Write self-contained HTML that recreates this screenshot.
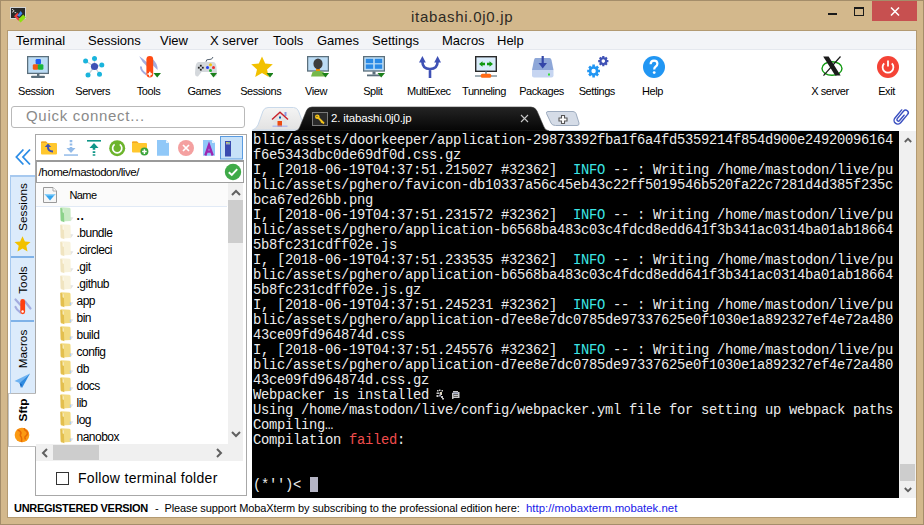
<!DOCTYPE html>
<html><head><meta charset="utf-8">
<style>
*{box-sizing:border-box}
html,body{margin:0;padding:0}
body{width:924px;height:525px;position:relative;overflow:hidden;background:#d3b88c;font-family:"Liberation Sans",sans-serif;color:#000}
.a{position:absolute}
#frame{position:absolute;left:0;top:0;width:924px;height:525px;border:1px solid #a48d6a}
#client{position:absolute;left:7px;top:30px;width:910px;height:488px;border:1px solid #b39a72;background:#fff}
#title{position:absolute;left:411px;top:8px;font-size:15px;letter-spacing:0.7px;color:#2e2a24;white-space:nowrap}
.menu{position:absolute;top:33px;font-size:13px;color:#000;white-space:nowrap}
.tlab{position:absolute;top:85px;font-size:11px;letter-spacing:-0.45px;white-space:nowrap;text-align:center;width:80px}
.ico{position:absolute;top:56px;width:22px;height:22px}
.term{position:absolute;left:252px;top:131px;width:647px;height:367px;background:#000}
.tl{position:absolute;left:253px;font-family:"Liberation Mono",monospace;font-size:13.8px;letter-spacing:-0.28px;color:#ececec;white-space:pre;line-height:15px}
.c{color:#3ce6e6}
.r{color:#f04c4c}
.row{position:absolute;left:76.5px;font-size:12px;letter-spacing:-0.5px;white-space:nowrap;color:#000}
.fold{position:absolute;left:59.5px;width:15px;height:16px}
.vt{position:absolute;overflow:visible}
.vt span{position:absolute;left:50%;top:50%;transform:translate(-50%,-50%) rotate(-90deg);font-size:11.8px;white-space:nowrap;line-height:12px}
</style></head><body>
<div id="frame"></div>
<!-- title icon -->
<svg class="a" style="left:10px;top:7px" width="17" height="17" viewBox="0 0 17 17">
<rect x="0.5" y="0.5" width="15" height="11" fill="#2a2a2a" stroke="#d4d4d4"/>
<path d="M2 2.2 L4.2 3.8 L2 5.4 M4.6 5.6 H6.2" stroke="#e0e0e0" fill="none" stroke-width="0.9"/>
<path d="M7.3 5.8 L9.2 7.6 L7 9.3 L9.9 12 L8.6 13.8 L4 9.3 Z" fill="#ee3c3c"/>
<path d="M10.7 4.1 L12.4 6.5 L9.6 9.8 L7.2 8.8 Z" fill="#3f86ee"/>
<path d="M9.2 11.6 L13.3 7.4 L15.8 10.5 L10.6 15.6 L8.8 13.8 Z" fill="#8ee010"/>
</svg>
<div id="title">itabashi.0j0.jp</div>
<!-- window buttons -->
<div class="a" style="left:828px;top:13px;width:9px;height:2px;background:#1a1a1a"></div>
<div class="a" style="left:854px;top:7px;width:10px;height:9px;border:1px solid #1a1a1a;border-top-width:2px"></div>
<div class="a" style="left:872px;top:1px;width:45px;height:20px;background:#c75050"></div>
<svg class="a" style="left:890px;top:7px" width="10" height="9" viewBox="0 0 10 9"><path d="M1 0.5 L9 8.5 M9 0.5 L1 8.5" stroke="#fff" stroke-width="1.5"/></svg>

<div id="client">
</div>
<!-- menu bar -->
<div class="a" style="left:8px;top:31px;width:908px;height:18px;background:#f3f4f7"></div>
<div class="a" style="left:8px;top:49px;width:908px;height:1px;background:#e5e8ee"></div>
<div class="menu" style="left:16px">Terminal</div>
<div class="menu" style="left:88px">Sessions</div>
<div class="menu" style="left:160px">View</div>
<div class="menu" style="left:210px">X server</div>
<div class="menu" style="left:273px">Tools</div>
<div class="menu" style="left:317px">Games</div>
<div class="menu" style="left:372px">Settings</div>
<div class="menu" style="left:442px">Macros</div>
<div class="menu" style="left:497px">Help</div>

<!-- toolbar icons -->
<svg class="ico" style="left:27px" viewBox="0 0 22 22">
 <rect x="0.6" y="0.6" width="20.8" height="16.8" fill="#bcdcf5" stroke="#5b6f7c" stroke-width="1.3"/>
 <rect x="10" y="17.5" width="2.4" height="2.5" fill="#5b6f7c"/>
 <rect x="4" y="19.8" width="14" height="2.2" rx="1" fill="#5b6f7c"/>
 <rect x="8.6" y="3" width="5.4" height="5.4" rx="1.3" fill="#1f5ff0"/>
 <rect x="5.8" y="8.2" width="5.6" height="5.6" rx="1.3" fill="#f25c12"/>
 <rect x="10.8" y="8.2" width="5.6" height="5.6" rx="1.3" fill="#19b53a"/>
</svg>
<svg class="ico" style="left:83px" viewBox="0 0 22 22">
 <path d="M11.5 10.5 L2.5 5 M11.5 10.5 L11.5 2.5 M11.5 10.5 L18.5 9 M11.5 10.5 L5 19 M11.5 10.5 L16.5 18" stroke="#c9d3da" stroke-width="1.3"/>
 <circle cx="11.5" cy="10.5" r="3.6" fill="#3f51b5"/>
 <circle cx="2.6" cy="5" r="2.5" fill="#1ab4dc"/><circle cx="11.5" cy="2.5" r="2.5" fill="#1ab4dc"/>
 <circle cx="18.8" cy="9" r="2.5" fill="#1ab4dc"/><circle cx="5" cy="19" r="2.5" fill="#1ab4dc"/>
 <circle cx="16.5" cy="18.2" r="2.5" fill="#1ab4dc"/>
</svg>
<svg class="ico" style="left:139px" viewBox="0 0 22 22">
 <path d="M0.2 0.2 Q2 1 8 6.5 L8 10.5 Q3 6 0.2 0.2 Z" fill="#a3acdf"/>
 <path d="M13.5 3 Q19 7.5 18.6 14 Q16 11.5 13.5 9 Z" fill="#a3acdf"/>
 <path d="M2.2 10.5 Q1 14 7.5 18.5" stroke="#a3acdf" stroke-width="2" fill="none"/>
 <rect x="7.4" y="0" width="6.8" height="21.5" rx="3.4" fill="#ff4a12"/>
 <path d="M10.8 15.8 V20.4 M8.5 18.1 H13.1" stroke="#fff" stroke-width="1.5"/>
 <path d="M14.5 17 H22 L18.2 21.5 Z" fill="#1a7f1a"/>
</svg>
<svg class="ico" style="left:195px" viewBox="0 0 22 22">
 <path d="M11 5.8 Q11 3 14 3.5 Q17 4 18 1" stroke="#556270" stroke-width="1" fill="none"/>
 <path d="M4 6 H18 Q21 6 21.5 11 L22 17 Q22 21 19 20.5 L15.5 16 H6.5 L3 20.5 Q0 21 0 17 L0.5 11 Q1 6 4 6 Z" fill="#d4d8dc"/>
 <g fill="#222"><rect x="4.9" y="8.8" width="1.8" height="1.8"/><rect x="4.9" y="12.8" width="1.8" height="1.8"/><rect x="2.9" y="10.8" width="1.8" height="1.8"/><rect x="6.9" y="10.8" width="1.8" height="1.8"/></g>
 <circle cx="15.5" cy="8.8" r="1.5" fill="#f2c40c"/><circle cx="12.5" cy="11.6" r="1.5" fill="#2040f0"/>
 <circle cx="18.5" cy="11.6" r="1.5" fill="#f03030"/><circle cx="15.5" cy="14.4" r="1.5" fill="#20b030"/>
 <path d="M15 17 H22 L18.5 21.5 Z" fill="#1a7f1a"/>
</svg>
<svg class="ico" style="left:251px" viewBox="0 0 22 22">
 <path d="M11 0.5 L14.2 7.6 L21.8 8.3 L16 13.4 L17.8 21 L11 17 L4.2 21 L6 13.4 L0.2 8.3 L7.8 7.6 Z" fill="#f2c100"/>
 <path d="M15.5 17 H22.5 L19 21.5 Z" fill="#1a7f1a"/>
</svg>
<svg class="ico" style="left:307px" viewBox="0 0 22 22">
 <rect x="0.6" y="0.6" width="20.8" height="14.4" fill="#bcdcf5" stroke="#5b6f7c" stroke-width="1.3"/>
 <path d="M4 20.5 L5.5 16 Q11 13 16.5 16 L18 20.5 Z" fill="#76b84a"/>
 <rect x="9" y="12.5" width="4" height="2.5" fill="#f39000"/>
 <ellipse cx="11" cy="7.8" rx="4.6" ry="5.4" fill="#3d3d3d"/>
 <path d="M15 17 H22 L18.5 21.5 Z" fill="#1a7f1a"/>
</svg>
<svg class="ico" style="left:363px" viewBox="0 0 22 22">
 <rect x="0.6" y="0.6" width="20.8" height="14.4" fill="#bcdcf5" stroke="#5b6f7c" stroke-width="1.3"/>
 <rect x="2.8" y="2.8" width="7.4" height="4.4" fill="#2a8ae6"/><rect x="11.8" y="2.8" width="7.4" height="4.4" fill="#2a8ae6"/>
 <rect x="2.8" y="8.4" width="7.4" height="4.4" fill="#2a8ae6"/><rect x="11.8" y="8.4" width="7.4" height="4.4" fill="#2a8ae6"/>
 <rect x="9.5" y="15.5" width="3" height="3" fill="#5b6f7c"/>
 <rect x="4" y="18.5" width="13" height="1.8" fill="#5b6f7c"/>
 <path d="M14.5 17 H22 L18.2 21.5 Z" fill="#1a7f1a"/>
</svg>
<svg class="ico" style="left:419px" viewBox="0 0 22 22">
 <path d="M11 22 V13 M3.4 5.5 Q3.4 13 11 13 Q18.6 13 18.6 5.5" stroke="#3f51b5" stroke-width="2.6" fill="none"/>
 <path d="M0 6.5 L3.4 0 L6.8 6.5 Z M15.2 6.5 L18.6 0 L22 6.5 Z" fill="#3f51b5"/>
</svg>
<svg class="ico" style="left:475px" viewBox="0 0 22 22">
 <rect x="0.7" y="0.7" width="20.6" height="14.6" fill="#d9ecfb" stroke="#2a2a2a" stroke-width="1.4"/>
 <path d="M4 8 L7.5 5.2 V6.8 H10 V9.2 H7.5 V10.8 Z M18 8 L14.5 5.2 V6.8 H12 V9.2 H14.5 V10.8 Z" fill="#119911"/>
 <rect x="10.2" y="15.5" width="1.6" height="3" fill="#6a8a9a"/>
 <rect x="0" y="19.3" width="22" height="1.4" fill="#7a8e98"/>
 <rect x="5.8" y="17.8" width="10.4" height="4" rx="1.5" fill="#ff6a14"/>
</svg>
<svg class="ico" style="left:532px" viewBox="0 0 22 22">
 <path d="M3.5 2 H17.5 Q19 2 19.5 4 L21.5 14 H0 L2 4 Q2.5 2 3.5 2 Z" fill="#8ea7d8"/>
 <path d="M0 14 H21.5 V19.5 Q21.5 21.5 19.5 21.5 H2 Q0 21.5 0 19.5 Z" fill="#c6d5f1"/>
 <rect x="16" y="17.5" width="2" height="2" fill="#33dd33"/>
 <path d="M10.7 0 V8" stroke="#3346a8" stroke-width="2.2"/>
 <path d="M6.5 7 H15 L10.7 12.5 Z" fill="#3346a8"/>
</svg>
<svg class="ico" style="left:587px" viewBox="0 0 22 22">
 <g fill="#2196f3"><circle cx="6.6" cy="15" r="4.8"/>
 <g stroke="#2196f3" stroke-width="2.6"><path d="M6.6 8.6 V21.4 M0.2 15 H13 M2.1 10.5 L11.1 19.5 M11.1 10.5 L2.1 19.5"/></g></g>
 <circle cx="6.6" cy="15" r="2.2" fill="#fff"/>
 <g fill="#3f51b5"><circle cx="16.3" cy="5.1" r="3.9"/>
 <g stroke="#3f51b5" stroke-width="2.2"><path d="M16.3 0 V10.2 M11.2 5.1 H21.4 M12.7 1.5 L19.9 8.7 M19.9 1.5 L12.7 8.7"/></g></g>
 <circle cx="16.3" cy="5.1" r="1.8" fill="#fff"/>
</svg>
<svg class="ico" style="left:643px" viewBox="0 0 22 22">
 <circle cx="11" cy="11" r="11" fill="#2196f3"/>
 <path d="M7.6 8.2 Q7.6 4.6 11 4.6 Q14.4 4.6 14.4 7.8 Q14.4 9.6 12.5 10.8 Q11.2 11.6 11.2 13.6" stroke="#fff" stroke-width="2.2" fill="none"/>
 <circle cx="11.2" cy="16.6" r="1.4" fill="#fff"/>
</svg>
<svg class="ico" style="left:821px" viewBox="0 0 22 22">
 <ellipse cx="11" cy="12.5" rx="10" ry="6.8" fill="none" stroke="#119911" stroke-width="1.4"/>
 <path d="M2.2 0.5 H7.6 L19.6 19.6 H14.2 Z" fill="#1a1a1a"/>
 <path d="M19.5 0.5 L2.5 19.6" stroke="#1a1a1a" stroke-width="1.2"/>
</svg>
<svg class="ico" style="left:877px" viewBox="0 0 22 22">
 <circle cx="11" cy="11" r="11" fill="#f44336"/>
 <path d="M7.2 7.4 A5.4 5.4 0 1 0 14.8 7.4" stroke="#fff" stroke-width="1.8" fill="none"/>
 <path d="M11 4.4 V10.6" stroke="#fff" stroke-width="1.8"/>
</svg>

<!-- toolbar labels -->
<div class="tlab" style="left:-4px">Session</div>
<div class="tlab" style="left:52.7px">Servers</div>
<div class="tlab" style="left:108.5px">Tools</div>
<div class="tlab" style="left:164px">Games</div>
<div class="tlab" style="left:220.7px">Sessions</div>
<div class="tlab" style="left:276px">View</div>
<div class="tlab" style="left:332.8px">Split</div>
<div class="tlab" style="left:388.8px">MultiExec</div>
<div class="tlab" style="left:444px">Tunneling</div>
<div class="tlab" style="left:501.5px">Packages</div>
<div class="tlab" style="left:556.8px">Settings</div>
<div class="tlab" style="left:612.5px">Help</div>
<div class="tlab" style="left:790px">X server</div>
<div class="tlab" style="left:846.5px">Exit</div>

<!-- quick connect -->
<div class="a" style="left:11px;top:106px;width:234px;height:22px;border:1px solid #b9b9b9;border-radius:3px;background:#fff"></div>
<div class="a" style="left:26px;top:107px;font-size:15px;letter-spacing:0.7px;color:#8a8a8a;white-space:nowrap">Quick connect...</div>

<!-- tabs -->
<div class="a" style="left:252px;top:130px;width:626px;height:1px;background:#d3e0ee"></div>
<svg class="a" style="left:248px;top:102px" width="352" height="30" viewBox="248 102 352 30">
 <defs><linearGradient id="hg" x1="0" y1="0" x2="0" y2="1"><stop offset="0" stop-color="#f4f4f4"/><stop offset="1" stop-color="#e2e2e2"/></linearGradient></defs>
 <path d="M252.5 130 Q256 129 258 125 L263 111 Q264.5 107.5 268 107.5 L293.5 107.5 Q297 107.5 298.5 111 L304 126 Q305 129.5 308 130 Z" fill="url(#hg)" stroke="#c9d9ea" stroke-width="1"/>
 <linearGradient id="bg" x1="0" y1="0" x2="0" y2="1"><stop offset="0" stop-color="#242424"/><stop offset="1" stop-color="#050505"/></linearGradient><path d="M295.5 131 Q298.5 130.5 299.8 127 L306.5 110.5 Q308 107 312 107 L531 107 Q535 107 537 111 L543.5 126 Q545 130.5 549 131 Z" fill="url(#bg)" stroke="#3a3a3a" stroke-width="0.6"/>
 <path d="M555.5 125.5 Q552 125.5 551 123 L546.5 113.5 Q546 111.5 548 111.5 L573 111.5 Q575 111.5 576 113.5 L579 123 Q579.5 125.5 577 125.5 Z" fill="#d5dce7" stroke="#9eacbf" stroke-width="1"/>
 <path d="M561.5 115.5 H564.5 V118 H567 V121 H564.5 V123.5 H561.5 V121 H559 V118 H561.5 Z" fill="#fff" stroke="#555" stroke-width="1.1"/>
 <!-- house -->
 <rect x="284.5" y="112" width="2" height="4" fill="#8d9ae0"/>
 <path d="M273.5 119 L280 113.5 L286.5 119 V126 H273.5 Z" fill="#e4e4e4"/>
 <path d="M272 119.5 L280 112.2 L288 119.5" stroke="#c8202a" stroke-width="1.4" fill="none"/>
 <rect x="279" y="116.5" width="2" height="2" fill="#0a5aa8"/>
 <rect x="277.5" y="121" width="4.5" height="6" fill="#ee4a10"/>
 <rect x="272.5" y="125.5" width="15" height="1.5" fill="#a8b4f0" opacity="0.8"/>
 <!-- key icon -->
 <rect x="312.5" y="112.5" width="15" height="13" fill="#2a2a2a" stroke="#7a7a7a" stroke-width="1"/>
 <circle cx="317.3" cy="116.8" r="2.3" fill="#f2c21a"/><circle cx="317" cy="116.4" r="0.6" fill="#5a4a10"/>
 <path d="M318 117.5 L324 123.5 M322 121.5 L321 122.5" stroke="#f2c21a" stroke-width="1.8"/>
 <!-- close x -->
 <path d="M521 115 L528 122 M528 115 L521 122" stroke="#c8c8c8" stroke-width="1.1"/>
</svg>
<div class="a" style="left:331px;top:112px;font-size:11.5px;letter-spacing:-0.15px;color:#fff;white-space:nowrap">2. itabashi.0j0.jp</div>
<svg class="a" style="left:888px;top:104px" width="26" height="26" viewBox="0 0 26 26">
 <g transform="translate(13,12.5) rotate(40) translate(-4.5,-9.5)">
 <path d="M0.8 4 V14.5 A3.7 3.7 0 0 0 8.2 14.5 V3.6 A2.6 2.6 0 0 0 3 3.6 V13.5 A1.5 1.5 0 0 0 6 13.5 V6.5" stroke="#3a4fc0" stroke-width="1.45" fill="none" stroke-linecap="round"/>
 </g>
</svg>

<!-- terminal -->
<div class="term"></div>
<div class="a" style="left:899px;top:131px;width:17px;height:367px;background:#f0f0f0"></div>
<div class="a" style="left:900px;top:464px;width:15px;height:17px;background:#cdcdcd"></div>
<svg class="a" style="left:904px;top:137px" width="8" height="6" viewBox="0 0 8 6"><path d="M0.8 5 L4 1.8 L7.2 5" stroke="#606060" stroke-width="1.8" fill="none"/></svg>
<svg class="a" style="left:904px;top:487px" width="8" height="6" viewBox="0 0 8 6"><path d="M0.8 1 L4 4.2 L7.2 1" stroke="#606060" stroke-width="1.8" fill="none"/></svg>
<div class="tl" style="top:133px">blic/assets/doorkeeper/application-29873392fba1f6a4fd5359214f854d900e24920096164</div>
<div class="tl" style="top:148px">f6e5343dbc0de69df0d.css.gz</div>
<div class="tl" style="top:163px">I, [2018-06-19T04:37:51.215027 #32362]  <span class="c">INFO</span> -- : Writing /home/mastodon/live/pu</div>
<div class="tl" style="top:178px">blic/assets/pghero/favicon-db10337a56c45eb43c22ff5019546b520fa22c7281d4d385f235c</div>
<div class="tl" style="top:193px">bca67ed26bb.png</div>
<div class="tl" style="top:208px">I, [2018-06-19T04:37:51.231572 #32362]  <span class="c">INFO</span> -- : Writing /home/mastodon/live/pu</div>
<div class="tl" style="top:223px">blic/assets/pghero/application-b6568ba483c03c4fdcd8edd641f3b341ac0314ba01ab18664</div>
<div class="tl" style="top:238px">5b8fc231cdff02e.js</div>
<div class="tl" style="top:253px">I, [2018-06-19T04:37:51.233535 #32362]  <span class="c">INFO</span> -- : Writing /home/mastodon/live/pu</div>
<div class="tl" style="top:268px">blic/assets/pghero/application-b6568ba483c03c4fdcd8edd641f3b341ac0314ba01ab18664</div>
<div class="tl" style="top:283px">5b8fc231cdff02e.js.gz</div>
<div class="tl" style="top:298px">I, [2018-06-19T04:37:51.245231 #32362]  <span class="c">INFO</span> -- : Writing /home/mastodon/live/pu</div>
<div class="tl" style="top:313px">blic/assets/pghero/application-d7ee8e7dc0785de97337625e0f1030e1a892327ef4e72a480</div>
<div class="tl" style="top:328px">43ce09fd964874d.css</div>
<div class="tl" style="top:343px">I, [2018-06-19T04:37:51.245576 #32362]  <span class="c">INFO</span> -- : Writing /home/mastodon/live/pu</div>
<div class="tl" style="top:358px">blic/assets/pghero/application-d7ee8e7dc0785de97337625e0f1030e1a892327ef4e72a480</div>
<div class="tl" style="top:373px">43ce09fd964874d.css.gz</div>
<div class="tl" style="top:388px">Webpacker is installed</div>
<div class="tl" style="top:403px">Using /home/mastodon/live/config/webpacker.yml file for setting up webpack paths</div>
<div class="tl" style="top:418px">Compiling…</div>
<div class="tl" style="top:433px">Compilation <span class="r">failed</span>:</div>
<div class="tl" style="top:448px"></div>
<div class="tl" style="top:463px"></div>
<div class="tl" style="top:478px">(*'')&lt; </div>
<div class="a" style="left:310px;top:477px;width:8px;height:15px;background:#b4b4c4"></div>
<svg class="a" style="left:436px;top:389px" width="28" height="11" viewBox="0 0 28 11">
 <g fill="#c8c8c8">
 <rect x="1" y="1" width="1.5" height="1.5"/><rect x="3" y="0.5" width="1.5" height="1.5"/><rect x="5.5" y="1" width="1.5" height="1.5"/>
 <rect x="0.5" y="3.5" width="3" height="1.5"/><rect x="4" y="3" width="2" height="3" fill="#e0d8c0"/>
 <rect x="0.5" y="6" width="2" height="2"/><rect x="3" y="5.5" width="2" height="2" fill="#a0a0b8"/>
 <rect x="5" y="7" width="2" height="2"/><rect x="6" y="9" width="2" height="1.5"/>
 <rect x="17" y="2" width="5" height="1.5"/><rect x="16.5" y="3.5" width="6" height="1.5" fill="#a8b0c8"/>
 <rect x="17.5" y="5.5" width="5" height="1.5"/><rect x="16" y="7.5" width="7" height="1.5"/>
 <rect x="16" y="4" width="1.5" height="6"/><rect x="22" y="3" width="1.5" height="6"/>
 </g>
</svg>

<!-- sftp panel -->
<div class="a" style="left:35px;top:134px;width:212px;height:362px;border:1px solid #a8a8a8;background:#fff"></div>
<div class="a" style="left:8px;top:393px;width:28px;height:54px;background:#fff;border:1px solid #c4c4c4;border-right:none"></div>
<div class="a" style="left:35px;top:394px;width:1px;height:52px;background:#fff"></div>
<!-- left sidebar -->
<svg class="a" style="left:14px;top:148px" width="18" height="18" viewBox="0 0 18 18">
 <path d="M9.4 1.5 L2.4 9 L9.4 16.5 M16 1.5 L9 9 L16 16.5" stroke="#2b8ce6" stroke-width="1.8" fill="none"/>
</svg>
<div class="a" style="left:10px;top:175px;width:25px;height:219px;background:#dcebfb;border-left:1px solid #a7c9ef;border-top:2px solid #a7c9ef;border-bottom:1px solid #b8b8b8"></div>
<div class="a" style="left:11px;top:256px;width:23px;height:2px;background:#7fb2e8"></div>
<div class="a" style="left:11px;top:320px;width:23px;height:2px;background:#7fb2e8"></div>
<div class="vt" style="left:13px;top:184px;width:19px;height:46px"><span>Sessions</span></div>
<div class="vt" style="left:13px;top:265px;width:19px;height:29px"><span>Tools</span></div>
<div class="vt" style="left:13px;top:330px;width:19px;height:38px"><span>Macros</span></div>
<div class="vt" style="left:13px;top:399px;width:19px;height:22px"><span style="font-weight:bold">Sftp</span></div>
<svg class="a" style="left:14px;top:236px" width="17" height="16" viewBox="0 0 17 16">
 <path d="M8.5 0.3 L10.9 5.4 L16.5 6 L12.3 9.8 L13.5 15.5 L8.5 12.6 L3.5 15.5 L4.7 9.8 L0.5 6 L6.1 5.4 Z" fill="#f2c100"/>
</svg>
<svg class="a" style="left:10px;top:294px" width="24" height="24" viewBox="0 0 24 24">
 <path d="M5.5 5.5 L10.5 11 M15 7.5 L20.5 14.5 M5.5 13 Q6.5 16 10.5 18.5" stroke="#a3acdf" stroke-width="2.2" stroke-linecap="round" fill="none"/>
 <rect x="10.3" y="5" width="4.8" height="15.2" rx="2.4" fill="#ff4010"/>
 <circle cx="12.6" cy="17.5" r="1.2" fill="#fff"/>
</svg>
<svg class="a" style="left:14px;top:373px" width="17" height="16" viewBox="0 0 17 16">
 <path d="M16 0.5 L0.5 8 L5.5 10 Z" fill="#6fb3f2"/>
 <path d="M16 0.5 L5.5 10 L8 15 Z" fill="#2f8be0"/>
 <path d="M5.5 10 L7 15 L8 11.5 Z" fill="#1565c0"/>
</svg>
<svg class="a" style="left:14px;top:427px" width="16" height="16" viewBox="0 0 16 16">
 <circle cx="8" cy="8" r="7.3" fill="#fb9a14"/>
 <path d="M3.5 3 Q6.5 3.5 7 6 Q5.5 8.5 7.2 10 Q8.2 12 7.5 15 M10 1.2 Q10.5 3.5 12.8 4.2 Q14.5 6.5 12.2 8.8 Q10 9.5 11.5 12.5" stroke="#e86a06" stroke-width="1.5" fill="none"/>
</svg>

<!-- sftp panel content -->
<svg width="0" height="0" style="position:absolute">
 <defs>
  <g id="fy"><path d="M13.5 10.5 L10.5 14.5 L10 10 Z" fill="#e4e4e4"/>
   <path d="M1 0.2 L9.5 0.8 Q10.5 1 10.5 2 L10.8 14 L1 14.6 Z" fill="#f2da80"/>
   <path d="M0.2 0.6 L3.8 2.4 L4.3 15.2 L0.6 13.6 Z" fill="#e3bf4e"/>
   <path d="M2.6 1.6 L3.8 2.4 L3.8 6 L2.6 5.2 Z" fill="#fbf3d0"/><rect x="9.8" y="10.6" width="1.2" height="2.6" fill="#a9cdf2"/></g>
<g id="fp"><path d="M13.5 10.5 L10.5 14.5 L10 10 Z" fill="#e4e4e4"/>
   <path d="M1 0.2 L9.5 0.8 Q10.5 1 10.5 2 L10.8 14 L1 14.6 Z" fill="#f8f2dc"/>
   <path d="M0.2 0.6 L3.8 2.4 L4.3 15.2 L0.6 13.6 Z" fill="#f0e4c0"/>
   <path d="M2.6 1.6 L3.8 2.4 L3.8 6 L2.6 5.2 Z" fill="#fffaf0"/></g>
<g id="fg"><path d="M13.5 10.5 L10.5 14.5 L10 10 Z" fill="#e4e4e4"/>
   <path d="M1 0.2 L9.5 0.8 Q10.5 1 10.5 2 L10.8 14 L1 14.6 Z" fill="#c8eac4"/>
   <path d="M0.2 0.6 L3.8 2.4 L4.3 15.2 L0.6 13.6 Z" fill="#8cd28a"/>
   <path d="M2.6 1.6 L3.8 2.4 L3.8 6 L2.6 5.2 Z" fill="#e6f6e4"/></g>
 </defs>
</svg>
<!-- sftp toolbar -->
<svg class="a" style="left:36px;top:135px" width="210" height="25" viewBox="36 135 210 25">
 <path d="M41 142.5 Q41 141.5 42 141.5 H46 L47.5 143 H56 Q57 143 57 144 V153.5 Q57 154.5 56 154.5 H42 Q41 154.5 41 153.5 Z" fill="#ffc72e"/>
 <path d="M41 142.5 Q41 141.5 42 141.5 H46 L47.5 143 H41 Z" fill="#f3a724"/>
 <path d="M48 146 Q47.5 151.5 53 151.5" stroke="#3f51b5" stroke-width="2" fill="none"/>
 <path d="M44.8 147 L48 143.5 L51.2 147 Z" fill="#3f51b5"/>
 <path d="M71 140 V142.2 M71 143.6 V145.6 M71 147 V148.5" stroke="#93bbe9" stroke-width="2.6"/>
 <path d="M66.5 148 H75.5 L71 153 Z" fill="#93bbe9"/>
 <rect x="64" y="154.3" width="14" height="1.5" fill="#93bbe9"/>
 <rect x="87" y="140" width="14" height="1.6" fill="#0f9688"/>
 <path d="M89.5 148 H98.5 L94 143 Z" fill="#0f9688"/>
 <path d="M94 147.5 V149.8 M94 151.2 V153 M94 154.2 V155.8" stroke="#0f9688" stroke-width="2.6"/>
 <circle cx="117.2" cy="148.2" r="8" fill="#6cb42c"/>
 <path d="M114.6 144.4 A4.6 4.6 0 1 0 119.8 144.4" stroke="#fff" stroke-width="1.7" fill="none"/>
 <path d="M132 142.5 Q132 141.5 133 141.5 H137 L138.5 143 H146 Q147 143 147 144 V151.5 Q147 152.5 146 152.5 H133 Q132 152.5 132 151.5 Z" fill="#ffc72e"/>
 <path d="M132 142.5 Q132 141.5 133 141.5 H137 L138.5 143 H132 Z" fill="#f3a724"/>
 <circle cx="144.4" cy="151.6" r="4" fill="#3aa43a"/>
 <path d="M144.4 149.3 V153.9 M142.1 151.6 H146.7" stroke="#fff" stroke-width="1.5"/>
 <path d="M157 140 H166 L169 143 V155.8 H157 Z" fill="#90c8f8"/>
 <path d="M166 140 V143 H169 Z" fill="#e6f3fd"/>
 <circle cx="186" cy="148" r="8" fill="#f4a0a0"/>
 <path d="M183 145 L189 151 M189 145 L183 151" stroke="#fff" stroke-width="1.7"/>
 <path d="M203 140 H212 L215 143 V155.8 H203 Z" fill="#90c8f8"/>
 <path d="M212 140 V143 H215 Z" fill="#e6f3fd"/>
 <path d="M205.3 155.5 L209 144.8 L212.7 155.5 M206.6 151.6 H211.4" stroke="#9c27b0" stroke-width="2.3" fill="none"/>
 <rect x="220.5" y="136.5" width="22" height="22.5" fill="#c7e1f8" stroke="#5a9be0" stroke-width="1"/>
 <rect x="225" y="141" width="6" height="15.5" fill="#3a4bb0"/>
 <rect x="226" y="142" width="4" height="2.5" fill="#9fa8c8"/>
 <rect x="226.2" y="142" width="1.2" height="1.2" fill="#f0d020"/><rect x="228.6" y="142" width="1.2" height="1.2" fill="#60d060"/>
</svg>
<!-- path box -->
<div class="a" style="left:36px;top:160px;width:208px;height:23px;border:1px solid #a0a0a0;border-top:2px solid #9a9a9a"></div>
<div class="a" style="left:38.5px;top:166px;font-size:11.5px;letter-spacing:-0.44px;white-space:nowrap">/home/mastodon/live/</div>
<svg class="a" style="left:224px;top:163px" width="18" height="18" viewBox="0 0 18 18">
 <circle cx="9" cy="9" r="8.2" fill="#3faa48"/>
 <path d="M4.8 9.2 L7.8 12 L13.2 6.2" stroke="#fff" stroke-width="1.9" fill="none"/>
</svg>
<!-- header -->
<div class="a" style="left:36px;top:183px;width:192px;height:23px;background:#fbfbfb"></div>
<div class="a" style="left:36px;top:206px;width:191px;height:1px;background:#e1eaf6"></div>
<svg class="a" style="left:43px;top:187px" width="15" height="16" viewBox="0 0 15 16">
 <path d="M0.5 0.5 H10 L13.5 4 V15.5 H0.5 Z" fill="#f6f6f6" stroke="#9a9a9a" stroke-width="1"/>
 <path d="M10 0.5 V4 H13.5" fill="#fff" stroke="#9a9a9a" stroke-width="0.8"/>
 <path d="M1.5 7 H12.5 L7 13.5 Z" fill="#35a6f0"/>
 <path d="M1.5 7 H12.5 L11 8.5 H3 Z" fill="#8fd2fa"/>
</svg>
<div class="a" style="left:69.5px;top:189px;font-size:11px;letter-spacing:-0.6px;white-space:nowrap">Name</div>
<!-- rows -->
<svg class="fold" style="top:207px"><use href="#fg"/></svg><div class="row" style="top:209px;font-weight:bold;letter-spacing:0.6px">..</div>
<svg class="fold" style="top:224px"><use href="#fp"/></svg><div class="row" style="top:226px">.bundle</div>
<svg class="fold" style="top:241px"><use href="#fp"/></svg><div class="row" style="top:243px">.circleci</div>
<svg class="fold" style="top:258px"><use href="#fp"/></svg><div class="row" style="top:260px">.git</div>
<svg class="fold" style="top:275px"><use href="#fp"/></svg><div class="row" style="top:277px">.github</div>
<svg class="fold" style="top:292px"><use href="#fy"/></svg><div class="row" style="top:294px">app</div>
<svg class="fold" style="top:309px"><use href="#fy"/></svg><div class="row" style="top:311px">bin</div>
<svg class="fold" style="top:326px"><use href="#fy"/></svg><div class="row" style="top:328px">build</div>
<svg class="fold" style="top:343px"><use href="#fy"/></svg><div class="row" style="top:345px">config</div>
<svg class="fold" style="top:360px"><use href="#fy"/></svg><div class="row" style="top:362px">db</div>
<svg class="fold" style="top:377px"><use href="#fy"/></svg><div class="row" style="top:379px">docs</div>
<svg class="fold" style="top:394px"><use href="#fy"/></svg><div class="row" style="top:396px">lib</div>
<svg class="fold" style="top:411px"><use href="#fy"/></svg><div class="row" style="top:413px">log</div>
<svg class="fold" style="top:428px"><use href="#fy"/></svg><div class="row" style="top:430px">nanobox</div>
<!-- v scrollbar -->
<div class="a" style="left:228px;top:183px;width:15px;height:278px;background:#f0f0f0"></div>
<div class="a" style="left:228px;top:200px;width:15px;height:43px;background:#cdcdcd"></div>
<svg class="a" style="left:231px;top:189px" width="10" height="7" viewBox="0 0 10 7"><path d="M1 6 L5 2 L9 6" stroke="#606060" stroke-width="2" fill="none"/></svg>
<svg class="a" style="left:231px;top:431px" width="10" height="7" viewBox="0 0 10 7"><path d="M1 1 L5 5 L9 1" stroke="#606060" stroke-width="2" fill="none"/></svg>
<!-- h scrollbar -->
<div class="a" style="left:36px;top:444px;width:192px;height:17px;background:#f0f0f0"></div>
<div class="a" style="left:53px;top:445px;width:46px;height:15px;background:#cdcdcd"></div>
<svg class="a" style="left:41px;top:448px" width="7" height="10" viewBox="0 0 7 10"><path d="M6 1 L2 5 L6 9" stroke="#606060" stroke-width="2" fill="none"/></svg>
<svg class="a" style="left:216px;top:448px" width="7" height="10" viewBox="0 0 7 10"><path d="M1 1 L5 5 L1 9" stroke="#606060" stroke-width="2" fill="none"/></svg>
<!-- follow -->
<div class="a" style="left:56px;top:472px;width:13px;height:13px;border:1px solid #333;background:#fff"></div>
<div class="a" style="left:78px;top:470px;font-size:14px;letter-spacing:0.3px;white-space:nowrap">Follow terminal folder</div>

<!-- status bar -->
<div class="a" style="left:14px;top:502px;font-size:11px;font-weight:bold;letter-spacing:-0.3px;white-space:nowrap">UNREGISTERED VERSION</div>
<div class="a" style="left:155px;top:502px;font-size:11px;letter-spacing:-0.11px;white-space:nowrap">-&nbsp; Please support MobaXterm by subscribing to the professional edition here:</div>
<div class="a" style="left:526px;top:502px;font-size:11.4px;white-space:nowrap;color:#1818e8">http://mobaxterm.mobatek.net</div>

</body></html>
